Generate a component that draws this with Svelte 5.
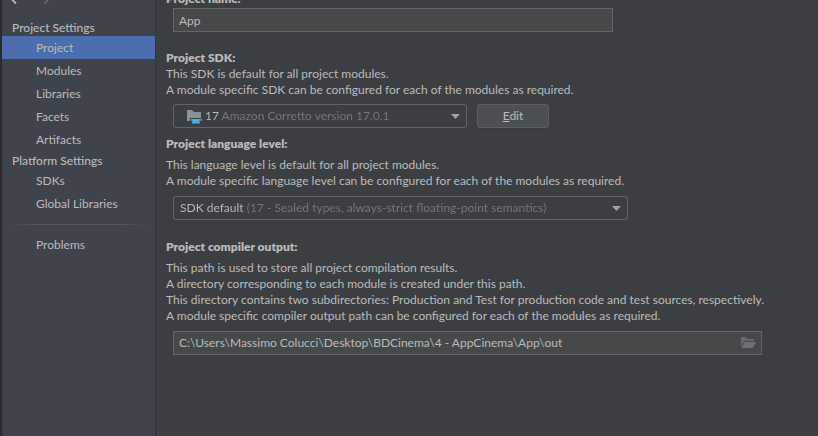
<script>
  const settings = [
    { title: 'Project Settings', items: ['Project', 'Modules', 'Libraries', 'Facets', 'Artifacts'] },
    { title: 'Platform Settings', items: ['SDKs', 'Global Libraries'] }
  ];
  let selected = $state('Project');
  let name = $state('App');
  let output = $state('C:\\Users\\Massimo Colucci\\Desktop\\BDCinema\\4 - AppCinema\\App\\out');
  const pick = (event, item) => {
    event.preventDefault();
    selected = item;
  };
</script>

{#snippet entry(item)}
  <a class="entry" class:selected={selected === item} href="#{item}" onclick={(e) => pick(e, item)}>{item}</a>
{/snippet}

{#snippet arrow()}
  <svg class="arrow" width="9" height="5" viewBox="0 0 9 5" aria-hidden="true"><path d="M0 0h9L4.5 5z" fill="#9fa3a5" /></svg>
{/snippet}

<div class="window">
  <nav class="sidebar">
    <div class="history">
      <button aria-label="Back"><svg width="16" height="16" viewBox="0 0 16 16"><path d="M7 1.500 1.500 7 7 12.500M1.500 7H13" fill="none" stroke="#b4b8bb" stroke-width="1.800" /></svg></button>
      <button aria-label="Forward"><svg width="16" height="16" viewBox="0 0 16 16"><path d="M3.500 1.500 9 7l-5.500 5.500M9 7H0" fill="none" stroke="#606367" stroke-width="1.800" /></svg></button>
    </div>
    {#each settings as group}
      <h2>{group.title}</h2>
      {#each group.items as item}{@render entry(item)}{/each}
    {/each}
    <hr />
    {@render entry('Problems')}
  </nav>

  <main>
    <section class="name">
      <label for="name">Project name:</label>
      <input id="name" class="field" bind:value={name} />
    </section>

    <section class="sdk">
      <label for="sdk">Project SDK:</label>
      <p>This SDK is default for all project modules.<br />A module specific SDK can be configured for each of the modules as required.</p>
      <div class="row">
        <div class="combo jdk">
          <svg class="folder" width="16" height="16" viewBox="0 0 16 16" aria-hidden="true">
            <path d="M1 2h5l2 2h7v6H4v3H1z" fill="#87939a" />
            <path d="M5 11h11v2h-2.500l-1 1H14v1.500H6V14h1l-2-1.500z" fill="#3fb5de" />
            <path d="M14 11.700h1.200v.8H14z" fill="#3c3f41" />
          </svg>
          <select id="sdk"><option>17 Amazon Corretto version 17.0.1</option></select>
          {@render arrow()}
        </div>
        <button class="edit"><u>E</u>dit</button>
      </div>
    </section>

    <section class="level">
      <label for="level">Project language level:</label>
      <p>This language level is default for all project modules.<br />A module specific language level can be configured for each of the modules as required.</p>
      <div class="combo language">
        <select id="level"><option>SDK default (17 - Sealed types, always-strict floating-point semantics)</option></select>
        {@render arrow()}
      </div>
    </section>

    <section class="output">
      <label for="output">Project compiler output:</label>
      <p>This path is used to store all project compilation results.<br />A directory corresponding to each module is created under this path.<br />This directory contains two subdirectories: Production and Test for production code and test sources, respectively.<br />A module specific compiler output path can be configured for each of the modules as required.</p>
      <div class="field path">
        <input id="output" bind:value={output} />
        <button aria-label="Browse">
          <svg width="16" height="16" viewBox="0 0 16 16"><path d="M1 12V2h5l2 2h6v2H4z" fill="#65696b" /><path d="M4.500 7H16l-3 6H1.500z" fill="#66737a" /></svg>
        </button>
      </div>
    </section>
  </main>
</div>

<style>
  :global(body) { margin: 0; background: #3c3f41; }
  .window {
    display: flex;
    min-height: 100vh;
    overflow: hidden;
    box-sizing: border-box;
    border-left: 2px solid #292b2c;
    background: #3c3f41;
    color: #bbbbbb;
    font: 12px/16px "Lato", "Segoe UI", sans-serif;
  }
  input, select, button { font: inherit; color: inherit; margin: 0; padding: 0; border: 0; background: none; outline: 0; }
  button svg { display: block; }

  .sidebar { flex: 0 0 153px; border-right: 1px solid #333638; background: #3f434c; }
  .history { display: flex; gap: 16px; height: 16px; margin-top: -9px; margin-bottom: 11px; padding-left: 7px; }
  h2 { margin: 0; padding: 2px 0 0 10px; font-size: 12px; font-weight: 500; line-height: 16px; }
  .entry { display: block; padding-left: 34px; line-height: 23px; color: inherit; text-decoration: none; }
  .selected { background: #4b6eaf; }
  hr { height: 1px; margin: 9px 8px 8px; border: 0; background: linear-gradient(90deg, transparent, #55585b 20%, #55585b 80%, transparent); }

  main { flex: 1; min-width: 0; padding: 0 56px 0 10px; }
  label { display: block; font-weight: 800; }
  p { margin: 0; white-space: nowrap; }
  .field, .combo, .edit { box-sizing: border-box; height: 24px; border: 1px solid #646464; }
  .field { display: block; margin-left: 7px; padding: 0 5px; background: #45494a; }
  .name { margin-top: -9px; }
  #name { width: 440px; margin-top: 1px; }
  .sdk { margin-top: 18px; }
  .row { display: flex; gap: 10px; margin-top: 6px; }
  .combo { display: flex; align-items: center; margin-left: 7px; padding: 0 6px; border-radius: 3px; }
  .combo select { flex: 1; min-width: 0; height: 22px; appearance: none; color: transparent; background-clip: text; }
  .combo option { color: #bbbbbb; background: #3c3f41; }
  .jdk { width: 294px; padding-left: 12px; }
  #sdk { background-image: linear-gradient(90deg, #bbbbbb 15px, #777777 15px); }
  #level { background-image: linear-gradient(90deg, #bbbbbb 64px, #777777 64px); }
  .folder { margin-right: 3px; }
  .edit { width: 72px; border-color: #5e6060; border-radius: 3px; background: #4c5052; box-shadow: 0 1px #37393b; }
  .level { margin-top: 8px; }
  .level p, .output p { margin-top: 5px; }
  .language { width: 455px; margin-top: 7px; }
  .output { margin-top: 19px; }
  .path { display: flex; align-items: center; margin-top: 7px; }
  .path input { flex: 1; min-width: 0; }
</style>
